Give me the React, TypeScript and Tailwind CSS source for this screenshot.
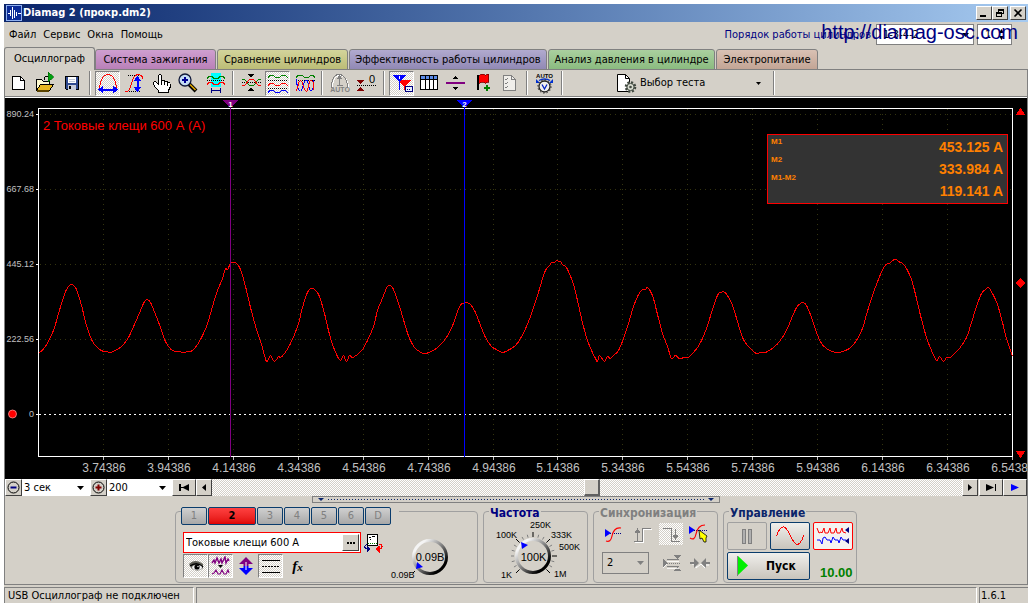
import React from "react";

const BEVEL =
  "border border-t-white border-l-white border-r-[#404040] border-b-[#404040] bg-[#d4d0c8]";
const DITHER =
  "bg-[repeating-conic-gradient(#ffffff_0_25%,#d4d0c8_0_50%)] bg-[length:2px_2px]";

/* ---------- toolbar icons, each on a 24 x 24 grid ---------- */

type Shape = { children: React.ReactNode; crisp?: boolean };

function Glyph({ children, crisp = true }: Shape) {
  return (
    <svg
      viewBox="0 0 24 24"
      className="block h-6 w-6 shrink-0"
      fill="none"
      shapeRendering={crisp ? "crispEdges" : "auto"}
      aria-hidden="true"
    >
      {children}
    </svg>
  );
}

const NewIcon = (
  <Glyph>
    <path d="M5.5 5.5h8l4 4v9h-12z" fill="#fff" stroke="#000" />
    <path d="M13.5 5.5v4h4" stroke="#000" />
  </Glyph>
);
const OpenIcon = (
  <Glyph>
    <path d="M2.5 19.5v-11h5l2 2h6v3" fill="#fffbd0" stroke="#000" />
    <path d="M2.5 19.500l4-6h13l-4 6z" fill="#e8b820" stroke="#000" />
    <path d="M3 20h12" stroke="#5a4300" strokeWidth="1.400" />
    <path d="M10.500 8.500c0-3 1-3 4-3" stroke="#000" />
    <path d="M14 1l6 5-6 5z" fill="#00a010" stroke="#006000" strokeWidth="0.600" />
  </Glyph>
);
const SaveIcon = (
  <Glyph>
    <path d="M4.500 5.500h13v13h-12l-1-1z" fill="#304a90" stroke="#000" />
    <rect x="7" y="6" width="8" height="6" fill="#fff" />
    <path d="M8 8.500h6M8 10.500h6" stroke="#c0c8d8" />
    <rect x="7" y="14" width="8" height="5" fill="#c8ccd8" />
    <rect x="8" y="15" width="2" height="3" fill="#000" />
  </Glyph>
);
const ArcWidthIcon = (
  <Glyph>
    <path d="M3.500 20C3.500 8 8 3.500 12 3.500S20.500 8 20.500 20" stroke="#f00" />
    <path d="M4 18.500h16" stroke="#00f" strokeWidth="2" />
    <path d="M2 18.500l5-4v8zM22 18.500l-5-4v8z" fill="#00f" />
  </Glyph>
);
const ArcHeightIcon = (
  <Glyph>
    <path d="M5 4.500h12M4 20.500h14" stroke="#000" strokeDasharray="1 1" />
    <path d="M1.500 20.500h2C10 20 7 4 15 3.500c3 0 4 1 5 4" stroke="#f00" />
    <path d="M14.500 7v12" stroke="#00f" strokeWidth="2" />
    <path d="M14.500 5l4 5h-8zM14.500 21l4-5h-8z" fill="#00f" />
  </Glyph>
);
const HandIcon = (
  <Glyph>
    <path
      d="M8.500 21.500v-2l-4-4-1-3c0-2 2-2 3-1l2 2v-8c0-2.500 3-2.500 3 0v5c0-1.500 3-1.500 3 0v1c0-1.500 3-1.500 3 0v1c0-1.300 2.500-1.300 2.500 0v4l-1.500 3v2z"
      fill="#fff"
      stroke="#000"
    />
    <path d="M11.500 10v4M14.500 11v3M17.500 12v3" stroke="#000" />
  </Glyph>
);
const ZoomIcon = (
  <Glyph crisp={false}>
    <path d="M12 13l7 7" stroke="#000" strokeWidth="4" />
    <path d="M13 13.500l5.500 5.500" stroke="#e0a800" strokeWidth="1.600" />
    <circle cx="8" cy="9" r="6" fill="#c4dcf4" stroke="#101838" strokeWidth="1.300" />
    <path d="M8 6v6M5 9h6" stroke="#000090" strokeWidth="2" />
  </Glyph>
);
const WaveSpanIcon = (
  <Glyph>
    <rect x="7" y="2" width="10" height="14" fill="#00ffff" />
    <path d="M3 7.500l2-2h3l2 2h4l2-2h3l2 2" stroke="#008000" />
    <path d="M3 9.500h18" stroke="#000" strokeDasharray="1 1" />
    <path d="M3 13.500l2-2h3l2 2h4l2-2h3l2 2" stroke="#f00" />
    <path d="M7.500 17v5M16.500 17v5M8 19.500h8" stroke="#000080" />
  </Glyph>
);
const CrossWavesIcon = (
  <Glyph>
    <path d="M2.500 11.500h19" stroke="#000" strokeDasharray="1 1" />
    <path d="M2.500 8.500h3l5 6h4l5-6h2" stroke="#008000" />
    <path d="M2.500 14.500h3l5-6h4l5 6h2" stroke="#f00" />
    <path d="M9 3h6l-3 4zM9 20h6l-3-4z" fill="#000" />
  </Glyph>
);
const WAVE = "l2-2h3l3 2h3l3-2h3l3 2";
const ThreeWavesIcon = (
  <Glyph>
    <path d={"M2 6.500" + WAVE} stroke="#008000" />
    <path d="M2 9.500h20M2 17.500h20" stroke="#000" strokeDasharray="1 1" />
    <path d={"M2 14.500" + WAVE} stroke="#f00" />
    <path d={"M2 21.500" + WAVE} stroke="#00f" />
  </Glyph>
);
const OverlaidWavesIcon = (
  <Glyph>
    <path d="M3 6.500l2-2h4l3 2h3l3-2h2l2 2" stroke="#008000" />
    <path d="M2.500 9.500h19" stroke="#000" strokeDasharray="1 1" />
    <path d="M3.500 8c0 7 2 12 4 12s3-11 6-11c2 0 2 11 4.500 11 1.500 0 3-5 3-11" stroke="#00f" />
    <path d="M3 19.500c2 0 2-10 4.500-10s3 10.500 6 10.500c2 0 2-10.500 4.500-10.500 2 0 3 4 3 9" stroke="#f00" />
  </Glyph>
);
const AutoArcIcon = (
  <Glyph>
    <path d="M4.500 18C4.500 8 8 4.500 12 4.500S20.500 8 20.500 18" stroke="#fff" />
    <path d="M3.500 17C3.500 7 7 3.500 11 3.500S19.500 7 19.500 17" stroke="#808080" />
    <path d="M11.500 6v9M9 14.500h6" stroke="#808080" />
    <path d="M11.500 4l3 4h-6z" fill="#808080" />
    <text x="12" y="21" textAnchor="middle" fontSize="7" fontWeight="bold" fill="#808080" fontFamily="Liberation Sans, sans-serif">
      AUTO
    </text>
  </Glyph>
);
const ZeroLevelIcon = (
  <Glyph>
    <path d="M2 14.500h20" stroke="#000" strokeDasharray="1 1" />
    <path d="M2 9h7l-3.500 4zM2 20h7l-3.500-4z" fill="#800000" />
    <text x="17" y="12" textAnchor="middle" fontSize="11" fill="#000" fontFamily="Liberation Sans, sans-serif">
      0
    </text>
  </Glyph>
);
const MarkersIcon = (
  <Glyph>
    <path d="M8 9h13l-6.500 7z" fill="#f00" />
    <path d="M14.500 14v5" stroke="#f00" />
    <path d="M3 4h13l-6.500 7z" fill="#00f" />
    <path d="M9.500 10v9" stroke="#00f" />
    <path d="M9.500 5v3" stroke="#fff" />
    <rect x="15.500" y="15.500" width="7" height="5" fill="#e8f0ff" stroke="#000080" />
    <path d="M17 18.500h4" stroke="#000080" strokeDasharray="1 1" />
  </Glyph>
);
const TableIcon = (
  <Glyph>
    <rect x="3.500" y="4.500" width="17" height="14" fill="#fff" stroke="#000" />
    <rect x="4" y="5" width="16" height="3" fill="#5c8ce8" />
    <path d="M4 8.500h16M8.500 5v14M12.500 5v14M16.500 5v14" stroke="#000" />
  </Glyph>
);
const SplitIcon = (
  <Glyph>
    <path d="M2 11.500h19" stroke="#800080" strokeWidth="2" />
    <path d="M8 8h6l-3-3zM8 16h6l-3 3z" fill="#000" />
  </Glyph>
);
const FlagIcon = (
  <Glyph>
    <path d="M7.500 4l4-1 2 1 4-1v8l-4 1-2-1-4 1z" fill="#f00" stroke="#700" strokeWidth="0.800" />
    <path d="M6.500 4v15" stroke="#000" strokeWidth="2" />
    <path d="M15.500 14v6M12.500 17h6" stroke="#008000" strokeWidth="2" />
  </Glyph>
);
const ChecklistIcon = (
  <Glyph>
    <path d="M5.500 4.500h8l4 4v11h-12z" fill="#f0eeea" stroke="#808080" />
    <path d="M13.500 4.500v4h4" stroke="#808080" />
    <path d="M7 8l1 1 2-2M7 12l1 1 2-2M7 16l1 1 2-2" stroke="#808080" />
  </Glyph>
);
const AutoVoltIcon = (
  <Glyph crisp={false}>
    <text x="11.500" y="7" textAnchor="middle" fontSize="6" fontWeight="bold" fill="#000" fontFamily="Liberation Sans, sans-serif">
      AUTO
    </text>
    <path d="M6 9.500c3-2 8-2 11 0" stroke="#0030d0" strokeWidth="1.300" />
    <path d="M3 8v4h4zM20 8v4h-4z" fill="#0030d0" />
    <circle cx="11.500" cy="15.500" r="5.500" fill="#f0f0f0" stroke="#202020" strokeWidth="1.300" />
    <circle cx="11.500" cy="15.500" r="6.600" stroke="#202020" strokeDasharray="1.400 2.050" />
    <path d="M9 13.500l2.500 4.500 2.500-4.500" stroke="#0020c0" strokeWidth="1.300" />
  </Glyph>
);
const TestDocIcon = (
  <Glyph crisp={false}>
    <path d="M2.500 3.500h8l4 4v13h-12z" fill="#fff" stroke="#000" />
    <path d="M10.500 3.500v4h4" stroke="#000" />
    <circle cx="15.500" cy="16" r="4.500" fill="#d8dcd0" stroke="#404840" strokeWidth="2.600" strokeDasharray="2 1.530" />
    <circle cx="15.500" cy="16" r="3.600" fill="#d8dcd0" stroke="#404840" />
    <circle cx="15.500" cy="16" r="1.300" fill="#404840" />
  </Glyph>
);

type Tool = { name: string; icon: React.ReactNode; on?: boolean };

const TOOL_GROUPS: Tool[][] = [
  [
    { name: "Новый", icon: NewIcon },
    { name: "Открыть", icon: OpenIcon },
    { name: "Сохранить", icon: SaveIcon },
  ],
  [
    { name: "Масштаб по ширине", icon: ArcWidthIcon, on: true },
    { name: "Масштаб по высоте", icon: ArcHeightIcon },
    { name: "Сдвиг", icon: HandIcon },
    { name: "Лупа", icon: ZoomIcon },
    { name: "Выделение", icon: WaveSpanIcon },
  ],
  [
    { name: "Совместить", icon: CrossWavesIcon },
    { name: "Раздельно", icon: ThreeWavesIcon, on: true },
    { name: "Наложить", icon: OverlaidWavesIcon },
  ],
  [
    { name: "Автомасштаб", icon: AutoArcIcon },
    { name: "Нулевой уровень", icon: ZeroLevelIcon },
  ],
  [
    { name: "Маркеры", icon: MarkersIcon, on: true },
    { name: "Таблица", icon: TableIcon },
    { name: "Линия", icon: SplitIcon },
    { name: "Добавить метку", icon: FlagIcon },
    { name: "Список", icon: ChecklistIcon },
  ],
  [{ name: "Автоизмерение", icon: AutoVoltIcon }],
];

function ToolButton({ name, icon, on }: Tool) {
  return (
    <button
      aria-label={name}
      aria-pressed={on ? true : undefined}
      className={
        "mx-px flex h-[25px] w-[25px] items-center justify-center overflow-hidden border " +
        (on
          ? "border-t-[#808080] border-l-[#808080] border-r-white border-b-white " + DITHER
          : "border-transparent")
      }
    >
      {icon}
    </button>
  );
}

function Separator() {
  return (
    <div className="flex h-full w-2 justify-center py-px">
      <div className="w-[2px] border-l border-[#808080] bg-white" />
    </div>
  );
}

/* ---------- title, menu, tabs ---------- */

function TitleBar() {
  return (
    <header className="flex h-[18px] items-center bg-linear-to-r from-[#0a246a] to-[#a6caf0] pr-[2px] pl-[2px]">
      <svg viewBox="0 0 16 16" className="mr-px h-4 w-4" fill="none" aria-hidden="true">
        <rect width="16" height="16" rx="1" fill="#0c2c98" />
        <rect x="0.500" y="0.500" width="15" height="15" stroke="#8fb0f0" />
        <path d="M2 8.500h2M4.500 5v6M6.500 2v12M8.500 5v8M10.500 7v4M12 8.500h3" stroke="#fff" strokeWidth="1" />
      </svg>
      <h1 className="text-[11px] font-bold text-white">Diamag 2 (прокр.dm2)</h1>
      <div className="ml-auto flex">
        <button aria-label="Свернуть" className={"flex h-[14px] w-4 items-center justify-center " + BEVEL}>
          <svg viewBox="0 0 10 10" className="h-[10px] w-[10px]" shapeRendering="crispEdges">
            <rect x="1" y="7" width="6" height="2" />
          </svg>
        </button>
        <button aria-label="Восстановить" className={"flex h-[14px] w-4 items-center justify-center " + BEVEL}>
          <svg viewBox="0 0 10 10" className="h-[10px] w-[10px]" shapeRendering="crispEdges" fill="none" stroke="#000">
            <path d="M3.500 4V1.500h5v4H6M3 2h6M1.500 4.500h5v4h-5zM1 5h6" />
          </svg>
        </button>
        <button aria-label="Закрыть" className={"ml-[2px] flex h-[14px] w-4 items-center justify-center " + BEVEL}>
          <svg viewBox="0 0 10 10" className="h-[10px] w-[10px]" fill="none" stroke="#000">
            <path d="M1.500 1.500l7 7M8.500 1.500l-7 7" strokeWidth="1.600" />
          </svg>
        </button>
      </div>
    </header>
  );
}

function MenuBar() {
  return (
    <div className="relative flex h-[25px] items-center pr-4 pl-[5px]">
      <nav className="flex gap-[7px]">
        <button>Файл</button>
        <button>Сервис</button>
        <button>Окна</button>
        <button>Помощь</button>
      </nav>
      <div className="ml-auto flex items-center">
        <label htmlFor="order" className="mr-[5px] text-[#000080]">
          Порядок работы цилиндров
        </label>
        <div className="relative mr-[3px]">
          <select
            id="order"
            className="block h-[21px] w-[98px] appearance-none border border-[#808080] bg-white pl-[6px]"
            defaultValue="1-3-4-2"
          >
            <option>1-3-4-2</option>
          </select>
          <svg viewBox="0 0 7 4" className="pointer-events-none absolute top-[9px] right-[5px] h-1 w-[7px]">
            <path d="M0 0h7L3.500 4z" />
          </svg>
        </div>
        <div className="relative">
          <input
            aria-label="Номер цилиндра"
            defaultValue="1"
            className="block h-[21px] w-[35px] border border-[#808080] bg-white pl-[7px]"
          />
          <svg viewBox="0 0 5 11" className="pointer-events-none absolute top-[5px] right-[8px] h-[11px] w-[5px]">
            <path d="M0 4h5L2.500 0zM0 7h5L2.500 11z" />
          </svg>
        </div>
      </div>
      <a
        href="http://diamag-osc.com"
        className="absolute top-0 right-[10px] z-10 font-['Liberation_Sans',sans-serif] text-[20px] leading-[20px] text-[#000080]"
      >
        http://diamag-osc.com
      </a>
    </div>
  );
}

const TABS = [
  { name: "Система зажигания", tint: "w-[121px] from-[#cf9fd0] to-[#b980b8]" },
  { name: "Сравнение цилиндров", tint: "w-[131px] from-[#d3d49b] to-[#bcbd76]" },
  { name: "Эффективность работы цилиндров", tint: "w-[198px] from-[#b1aacf] to-[#9189b5]" },
  { name: "Анализ давления в цилиндре", tint: "w-[167px] from-[#aad09f] to-[#8bbb80]" },
  { name: "Электропитание", tint: "w-[102px] from-[#d9c1b4] to-[#c3a595]" },
];

function TabBar() {
  return (
    <div role="tablist" className="relative z-10 -mb-px flex h-[23px] items-end">
      <button
        role="tab"
        aria-selected="true"
        className="h-[23px] w-[91px] rounded-t-[3px] border border-b-0 border-[#808080] bg-[#d4d0c8]"
      >
        Осциллограф
      </button>
      {TABS.map((t) => (
        <button
          key={t.name}
          role="tab"
          aria-selected="false"
          className={
            "mr-px flex h-[21px] items-center justify-center rounded-t-[3px] border border-[#808080] bg-linear-to-b whitespace-nowrap " +
            t.tint
          }
        >
          {t.name}
        </button>
      ))}
    </div>
  );
}

function Toolbar() {
  return (
    <div className="flex h-[28px] items-center border-b border-white">
      <div className="flex h-[27px] w-full items-center border-b border-[#808080]">
        {TOOL_GROUPS.map((g, i) => (
          <React.Fragment key={i}>
            {g.map((t) => (
              <ToolButton key={t.name} {...t} />
            ))}
            <Separator />
          </React.Fragment>
        ))}
        <button className="ml-[49px] flex h-6 w-[155px] items-center pr-[9px]">
          {TestDocIcon}
          <span className="ml-px">Выбор теста</span>
          <svg viewBox="0 0 5 3" className="ml-auto h-[3px] w-[5px]">
            <path d="M0 0h5L2.500 3z" />
          </svg>
        </button>
        <Separator />
      </div>
    </div>
  );
}

/* ---------- oscilloscope plot ---------- */

const TRACE: number[] = [
  38, 353, 45, 346, 53, 330, 58, 313, 63, 297, 66, 289, 69, 285, 71, 284, 73, 285, 76, 289, 81, 305, 86, 325, 92, 341,
  98, 348, 103, 351, 106, 351, 109, 352, 115, 350, 122, 345, 128, 337, 134, 324, 140, 310, 144, 301, 147, 299, 150, 302,
  155, 314, 160, 327, 164, 339, 168, 346, 172, 350, 178, 351, 183, 352, 188, 351, 192, 350, 197, 344, 201, 337, 206,
  326, 210, 313, 214, 299, 217, 290, 222, 278, 225, 268, 227, 269, 230, 263, 233, 262, 236, 263, 240, 269, 245, 286,
  250, 307, 256, 329, 261, 344, 264, 355, 266, 361, 268, 359, 270, 355, 274, 361, 278, 356, 280, 357, 284, 353, 289,
  345, 294, 334, 298, 323, 302, 307, 306, 294, 309, 289, 312, 288, 315, 290, 319, 296, 324, 313, 328, 330, 331, 341,
  336, 354, 340, 360, 343, 355, 346, 361, 349, 355, 352, 357, 357, 354, 362, 349, 367, 340, 373, 326, 377, 310, 381,
  300, 385, 290, 388, 285, 392, 287, 396, 297, 400, 309, 405, 326, 409, 338, 414, 347, 419, 351, 424, 353, 431, 351,
  437, 347, 443, 341, 450, 330, 454, 320, 459, 306, 462, 303, 466, 302, 470, 304, 475, 312, 480, 325, 485, 337, 491,
  346, 496, 349, 502, 352, 509, 349, 515, 345, 520, 338, 526, 326, 531, 313, 537, 295, 543, 275, 546, 268, 549, 265,
  551, 262, 554, 262, 556, 260, 558, 261, 560, 261, 562, 264, 565, 266, 568, 271, 573, 284, 577, 300, 581, 318, 586,
  337, 591, 350, 595, 358, 597, 361, 599, 355, 604, 361, 607, 356, 610, 358, 613, 355, 618, 350, 623, 338, 628, 323,
  633, 306, 638, 294, 642, 289, 645, 289, 647, 287, 652, 295, 657, 314, 662, 333, 667, 346, 671, 358, 675, 355, 679,
  358, 684, 357, 688, 357, 692, 353, 697, 347, 702, 338, 707, 325, 712, 309, 716, 297, 719, 292, 721, 292, 723, 291,
  727, 295, 732, 305, 737, 321, 742, 337, 747, 345, 752, 350, 756, 353, 760, 352, 765, 352, 773, 347, 779, 341, 786,
  330, 791, 318, 796, 307, 800, 303, 803, 302, 806, 305, 811, 317, 816, 332, 821, 343, 826, 348, 832, 351, 838, 352,
  845, 350, 850, 347, 856, 340, 862, 328, 866, 314, 870, 301, 873, 292, 876, 284, 880, 274, 884, 266, 887, 263, 889,
  263, 892, 260, 896, 259, 898, 261, 902, 263, 906, 268, 911, 279, 916, 298, 920, 315, 926, 337, 931, 350, 936, 360,
  939, 356, 943, 361, 946, 357, 950, 357, 953, 354, 959, 348, 966, 337, 971, 322, 976, 306, 981, 293, 985, 289, 988,
  287, 992, 293, 997, 304, 1002, 322, 1006, 338, 1012, 356,
];

function tracePath(p: number[]): string {
  const n = p.length / 2;
  const at = (i: number) => {
    const k = Math.max(0, Math.min(n - 1, i));
    return [p[2 * k], p[2 * k + 1]];
  };
  let d = `M${p[0]} ${p[1]}`;
  for (let i = 0; i < n - 1; i++) {
    const [a, b, c, e] = [at(i - 1), at(i), at(i + 1), at(i + 2)];
    d += `C${b[0] + (c[0] - a[0]) / 6} ${b[1] + (c[1] - a[1]) / 6} ${c[0] - (e[0] - b[0]) / 6} ${
      c[1] - (e[1] - b[1]) / 6
    } ${c[0]} ${c[1]}`;
  }
  return d;
}

const X_TICKS = [103, 168, 233, 298, 363, 428, 493, 557, 622, 687, 752, 817, 882, 947, 1012];
const Y_TICKS = [
  { y: 114, label: "890.24" },
  { y: 189, label: "667.68" },
  { y: 264, label: "445.12" },
  { y: 339, label: "222.56" },
  { y: 414, label: "0" },
];

function Plot() {
  return (
    <div className="relative bg-black">
      <svg
        viewBox="5 98 1022 381"
        className="block h-auto w-full font-['Liberation_Sans',sans-serif]"
        role="img"
        aria-label="Осциллограмма"
      >
        <g shapeRendering="crispEdges" fill="none">
          {X_TICKS.slice(0, -1).map((x) => (
            <path key={x} d={`M${x + 0.5} 109V456`} stroke="#34340f" strokeDasharray="1 4" />
          ))}
          {Y_TICKS.slice(0, 4).map((t) => (
            <path key={t.y} d={`M40 ${t.y + 0.5}H1012`} stroke="#34340f" strokeDasharray="1 4" />
          ))}
          <path d="M39 414.500H1012" stroke="#fff" strokeDasharray="2 3" />
          <rect x="38.500" y="108.500" width="974" height="348" stroke="#fff" />
          {Y_TICKS.map((t) => (
            <path key={t.y} d={`M36 ${t.y + 0.5}H39`} stroke="#fff" />
          ))}
          {X_TICKS.map((x) => (
            <path key={x} d={`M${x + 0.5} 457V460`} stroke="#c0c0c0" />
          ))}
          <path d={tracePath(TRACE)} stroke="#f00" transform="translate(0.5 0.5)" />
          <path d="M230.500 101V457" stroke="#800080" />
          <path d="M464.500 101V457" stroke="#00f" />
          <path d="M223 100h15l-7.500 8z" fill="#800080" />
          <path d="M457 100h15l-7.500 8z" fill="#00f" />
          <path d="M1020.500 108l5 7h-10zM1020.500 458l5-7h-10zM1020.500 278l5 5-5 5-5-5z" fill="#f00" />
        </g>
        <circle cx="12.500" cy="414" r="4" fill="#f00" stroke="#ff9090" strokeWidth="0.800" />
        <g fill="#fff" fontSize="8" fontWeight="bold" textAnchor="middle">
          <text x="230.500" y="107">1</text>
          <text x="464.500" y="107">2</text>
        </g>
        <g fill="#c0c0c0" fontSize="9" textAnchor="end">
          {Y_TICKS.map((t) => (
            <text key={t.y} x="34" y={t.y + 3}>
              {t.label}
            </text>
          ))}
        </g>
        <g fill="#c0c0c0" fontSize="12" textAnchor="middle">
          {X_TICKS.map((x, i) => (
            <text key={x} x={x + 1} y="472">
              {(3.74386 + i * 0.2).toFixed(5)}
            </text>
          ))}
        </g>
        <text x="43" y="130" fontSize="13" fill="#f00">
          2 Токовые клещи 600 А (А)
        </text>
      </svg>
      <div className="absolute top-[36px] right-[19px] flex h-[70px] w-[241px] justify-between border border-[#f00] bg-[#333333] pr-1 pl-[3px] font-['Liberation_Sans',sans-serif] font-bold text-[#ff8000]">
        <div className="-mt-[2px] text-[8px] leading-[18px]">
          <div>М1</div>
          <div>М2</div>
          <div>М1-М2</div>
        </div>
        <div className="pt-px text-right text-sm leading-[22px]">
          <div>453.125 A</div>
          <div>333.984 A</div>
          <div>119.141 A</div>
        </div>
      </div>
    </div>
  );
}

/* ---------- time scale and scrolling ---------- */

function Drop({ label, value, width }: { label: string; value: string; width: string }) {
  return (
    <div className="relative">
      <select
        aria-label={label}
        defaultValue={value}
        className={"block h-[17px] appearance-none bg-white pl-[2px] leading-[17px] " + width}
      >
        <option>{value}</option>
      </select>
      <svg viewBox="0 0 7 4" className="pointer-events-none absolute top-[7px] right-[6px] h-1 w-[7px]">
        <path d="M0 0h7L3.500 4z" />
      </svg>
    </div>
  );
}

function ScrollRow() {
  return (
    <div className="flex h-[17px] items-stretch">
      <button aria-label="Уменьшить время" className={"flex w-[17px] items-center justify-center " + BEVEL}>
        <svg viewBox="0 0 13 13" className="h-[13px] w-[13px]" fill="none">
          <circle cx="6.500" cy="6.500" r="5.500" stroke="#000" />
          <path d="M3.500 6.500h6" stroke="#000080" strokeWidth="2" />
        </svg>
      </button>
      <Drop label="Развёртка" value="3 сек" width="w-[68px]" />
      <button aria-label="Увеличить время" className={"flex w-[17px] items-center justify-center " + BEVEL}>
        <svg viewBox="0 0 13 13" className="h-[13px] w-[13px]" fill="none">
          <circle cx="6.500" cy="6.500" r="5.500" stroke="#000" />
          <path d="M3.500 6.500h6M6.500 3.500v6" stroke="#800000" strokeWidth="2" />
        </svg>
      </button>
      <Drop label="Масштаб" value="200" width="w-[65px]" />
      <button aria-label="В начало" className={"flex w-[24px] items-center justify-center " + BEVEL}>
        <svg viewBox="0 0 11 7" className="h-[7px] w-[11px]">
          <path d="M0 0h2v7H0zM10 0v7L3 3.500zM2 3h8v1H2z" />
        </svg>
      </button>
      <button aria-label="Назад" className={"flex w-[16px] items-center justify-center " + BEVEL}>
        <svg viewBox="0 0 4 7" className="h-[7px] w-1">
          <path d="M4 0v7L0 3.500z" />
        </svg>
      </button>
      <input
        type="range"
        aria-label="Позиция"
        min={0}
        max={734}
        defaultValue={372}
        className={
          "m-0 h-[17px] min-w-0 flex-1 appearance-none [&::-webkit-slider-thumb]:h-[17px] [&::-webkit-slider-thumb]:w-4 [&::-webkit-slider-thumb]:appearance-none [&::-webkit-slider-thumb]:border-r-2 [&::-webkit-slider-thumb]:border-b-2 [&::-webkit-slider-thumb]:border-t [&::-webkit-slider-thumb]:border-l [&::-webkit-slider-thumb]:border-t-white [&::-webkit-slider-thumb]:border-l-white [&::-webkit-slider-thumb]:border-r-[#606060] [&::-webkit-slider-thumb]:border-b-[#606060] [&::-webkit-slider-thumb]:bg-[#d4d0c8] " +
          DITHER
        }
      />
      <button aria-label="Вперёд" className={"flex w-[16px] items-center justify-center " + BEVEL}>
        <svg viewBox="0 0 4 7" className="h-[7px] w-1">
          <path d="M0 0v7l4-3.500z" />
        </svg>
      </button>
      <button aria-label="В конец" className={"ml-px flex w-[24px] items-center justify-center " + BEVEL}>
        <svg viewBox="0 0 11 7" className="h-[7px] w-[11px]">
          <path d="M9 0h1v7H9zM0 0v7l8-3.500z" />
        </svg>
      </button>
      <button aria-label="Воспроизвести" className={"flex w-[24px] items-center justify-center " + BEVEL}>
        <svg viewBox="0 0 8 7" className="h-[7px] w-2" fill="#00f">
          <path d="M0 0v7l8-3.500z" />
        </svg>
      </button>
    </div>
  );
}

function Splitter() {
  return (
    <div className="mx-auto flex h-[7px] w-[408px] items-center border border-[#808080] px-[5px]">
      <svg viewBox="0 0 6 3" className="h-[3px] w-[6px]" fill="#0a246a">
        <path d="M0 0h6L3 3z" />
      </svg>
      <svg viewBox="0 0 376 1" className="mx-[4px] h-px min-w-0 flex-1" preserveAspectRatio="none" shapeRendering="crispEdges">
        <path d="M0 .5h376" stroke="#0a246a" strokeDasharray="1 2" />
      </svg>
      <svg viewBox="0 0 6 3" className="h-[3px] w-[6px]" fill="#0a246a">
        <path d="M0 0h6L3 3z" />
      </svg>
    </div>
  );
}

/* ---------- bottom control groups ---------- */

const GROUP = "h-[72px] rounded-[4px] border border-[#a0a0a0]";
const LEGEND = "-mt-[6px] ml-[5px] w-fit bg-[#d4d0c8] px-px text-[12px] leading-[14px] font-bold";

function MiniTool({ name, on, children }: { name: string; on?: boolean; children: React.ReactNode }) {
  return (
    <button
      aria-label={name}
      aria-pressed={on ? true : undefined}
      className={
        "flex h-6 w-[25px] items-center justify-center border " +
        (on
          ? "border-t-[#808080] border-l-[#808080] border-r-white border-b-white " + DITHER
          : "border-transparent")
      }
    >
      {children}
    </button>
  );
}

function KnobFace({ cx, cy, id }: { cx: number; cy: number; id: string }) {
  return (
    <>
      <defs>
        <linearGradient id={id} x1="0.1" y1="0.1" x2="0.9" y2="0.9">
          <stop offset="0.1" stopColor="#f4f4f4" />
          <stop offset="0.5" stopColor="#808080" />
          <stop offset="0.9" stopColor="#000" />
        </linearGradient>
      </defs>
      <circle cx={cx} cy={cy} r="16.500" fill="#d4d0c8" stroke={`url(#${id})`} strokeWidth="3" />
    </>
  );
}

function ChannelGroup() {
  return (
    <section aria-label="Канал" className={"w-[303px] pl-[5px] " + GROUP}>
      <div className="-mt-[5px] flex w-[218px] bg-[#d4d0c8]">
        {["1", "2", "3", "4", "5", "6", "D"].map((c) => (
          <button
            key={c}
            className={
              "mr-px h-[18px] rounded-[2px] border border-[#0a3c6c] bg-linear-to-b leading-4 " +
              (c === "2"
                ? "w-[48px] from-[#ff4040] to-[#e00000] font-bold text-black"
                : "w-[26px] from-[#d0d0d0] to-[#a8a8a8] text-[#808080]")
            }
          >
            {c}
          </button>
        ))}
      </div>
      <div className="flex pt-[7px] pl-[2px]">
        <div>
          <div className="flex items-center">
            <div className="flex h-[21px] w-[178px] items-center border border-[#f00] bg-white">
              <input
                aria-label="Датчик"
                defaultValue="Токовые клещи 600 А"
                className="h-[19px] min-w-0 flex-1 bg-transparent pl-[2px]"
              />
              <button aria-label="Выбрать датчик" className={"mr-px flex h-[17px] w-[17px] items-center justify-center " + BEVEL}>
                <svg viewBox="0 0 8 2" className="h-[2px] w-2" shapeRendering="crispEdges">
                  <path d="M0 0h2v2H0zM3 0h2v2H3zM6 0h2v2H6z" />
                </svg>
              </button>
            </div>
            <button aria-label="Подключение" className="ml-[3px]">
              <svg viewBox="0 0 19 20" className="block h-5 w-[19px]" fill="none" shapeRendering="crispEdges">
                <rect x="3.500" y="1.500" width="10" height="11" fill="#fff" stroke="#000" />
                <path d="M5 4.500h2M8 3.500h3M6 6.500h1" stroke="#000" />
                <path d="M4 10.500h9" stroke="#008000" strokeDasharray="1 1" />
                <path d="M2.500 11.500l-2 2 1 2h2" stroke="#000080" />
                <path d="M3 12.500l4 3.500-4 3.500z" fill="#000080" />
                <path d="M15 11.500h2l1 2-1 2h-2" stroke="#f00" />
                <path d="M15.500 12.500l-4 3.500 4 3.500z" fill="#f00" />
              </svg>
            </button>
          </div>
          <div className="mt-px flex">
            <MiniTool name="Показать канал" on>
              <svg viewBox="0 0 16 12" className="h-3 w-4" fill="none">
                <path d="M1 4c4-4 9-4 14 0v4c-2 3-8 3-11 1z" fill="#606058" />
                <path d="M2 6c4-3 9-3 13 1" stroke="#000" strokeWidth="1.500" />
                <ellipse cx="9" cy="7.500" rx="5" ry="2.500" fill="#f0f0f0" />
                <circle cx="9" cy="7" r="2.600" fill="#000" />
                <circle cx="10" cy="6.500" r="0.700" fill="#fff" />
              </svg>
            </MiniTool>
            <MiniTool name="Фильтр" on>
              <svg viewBox="0 0 19 20" className="h-5 w-[19px]" fill="none">
                <path d="M1 7l2-3 1 3 2-5 2 5 2-4 1 4 3-6 1 6 2-4 1 2" stroke="#800080" strokeWidth="1.400" />
                <path d="M7 9h5l-2.500 3z" fill="#000" />
                <path d="M1 18l2-1 2-3 2 4 2 0 2-4 2 4 2 0 2-4 1 3" stroke="#800080" strokeWidth="1.100" />
              </svg>
            </MiniTool>
            <MiniTool name="Сдвиг по вертикали">
              <svg viewBox="0 0 16 18" className="h-[18px] w-4">
                <path d="M8 0l7 7h-4.500v2h-5V7H1z" fill="#800080" />
                <path d="M8 18l7-7h-4.500V9h-5v2H1z" fill="#00f" />
                <path d="M7.500 5h1v8h-1z" fill="#fff" />
              </svg>
            </MiniTool>
            <MiniTool name="Линии" on>
              <svg viewBox="0 0 18 14" className="h-[14px] w-[18px]" stroke="#000" shapeRendering="crispEdges">
                <path d="M0 1.500h18M0 13.500h18" />
                <path d="M0 7.500h18" strokeDasharray="2 1" />
              </svg>
            </MiniTool>
            <button className="ml-[2px] w-[25px] font-['Liberation_Serif',serif] text-[15px] leading-5 font-bold italic">
              f<span className="text-[11px]">x</span>
            </button>
          </div>
        </div>
        <svg viewBox="0 0 68 50" className="ml-[2px] block h-[50px] w-[68px] font-['Liberation_Sans',sans-serif]" fill="#000">
          <KnobFace cx={45} cy={25} id="gain" />
          <path d="M32 30l6 5-7 2z" fill="#00f" />
          <text x="45" y="29" textAnchor="middle" fontSize="11">0.09В</text>
          <text x="6" y="46" fontSize="9">0.09В</text>
          <path d="M28 41l2-2" stroke="#000" />
        </svg>
      </div>
    </section>
  );
}

const RATE_TICKS = Array.from({ length: 19 }, (_, i) => 135 + i * 15);

function RateGroup() {
  return (
    <section aria-label="Частота" className={"w-[105px] " + GROUP}>
      <div className={"text-[#000080] " + LEGEND}>Частота</div>
      <svg viewBox="484 520 103 61" className="block h-[61px] w-full font-['Liberation_Sans',sans-serif]">
        {RATE_TICKS.map((a, i) => {
          const r = (a * Math.PI) / 180;
          const major = i === 0 || i === 6 || i === 9 || i === 12 || i === 15 || i === 18;
          const r1 = 19;
          const r2 = major ? 24 : 22;
          return (
            <path
              key={a}
              d={`M${533 + r1 * Math.cos(r)} ${556 + r1 * Math.sin(r)}L${533 + r2 * Math.cos(r)} ${556 + r2 * Math.sin(r)}`}
              stroke={major ? "#000" : "#808080"}
            />
          );
        })}
        <KnobFace cx={533} cy={556} id="rate" />
        <path d="M521 542l7 3-6 4z" fill="#00f" />
        <text x="533.500" y="561" textAnchor="middle" fontSize="11">100K</text>
        <g fontSize="9">
          <text x="530" y="528">250K</text>
          <text x="496" y="538">100K</text>
          <text x="551" y="538">333K</text>
          <text x="559" y="550">500K</text>
          <text x="501" y="578">1K</text>
          <text x="554" y="577">1M</text>
        </g>
      </svg>
    </section>
  );
}

function SyncGroup() {
  return (
    <section aria-label="Синхронизация" className={"w-[125px] " + GROUP}>
      <div className={"text-[#808080] " + LEGEND}>Синхронизация</div>
      <div className="mt-[3px] flex items-center justify-between pr-[6px] pl-2">
        <button aria-label="Уровень">
          <svg viewBox="0 0 24 22" className="block h-[22px] w-6" fill="none">
            <path d="M3 6v8l6-4z" fill="#00f" />
            <path d="M8 10.500h12" stroke="#000080" strokeDasharray="1 1" />
            <path d="M4 18c3 1 5 0 6-5S13 4 19 5" stroke="#f00" strokeWidth="1.200" />
          </svg>
        </button>
        <button aria-label="По фронту">
          <svg viewBox="0 0 24 22" className="block h-[22px] w-6" fill="none" shapeRendering="crispEdges">
            <path d="M5 19.500h8.500v-13h8" stroke="#fff" />
            <path d="M4 18.500h8.500v-13h8" stroke="#808080" />
            <path d="M7.500 8v10" stroke="#808080" />
            <path d="M7.500 5l3 5h-6z" fill="#808080" />
          </svg>
        </button>
        <button aria-label="По спаду" className={DITHER}>
          <svg viewBox="0 0 24 22" className="block h-[22px] w-6" fill="none" shapeRendering="crispEdges">
            <path d="M4 5.500h8.500v13h8" stroke="#808080" />
            <path d="M16.500 6v10" stroke="#808080" />
            <path d="M16.500 17l3-5h-6z" fill="#808080" />
          </svg>
        </button>
        <button aria-label="Выбрать уровень">
          <svg viewBox="0 0 24 22" className="block h-[22px] w-6" fill="none">
            <path d="M2 3v8l6-4z" fill="#00f" />
            <path d="M7 7.500h14" stroke="#000080" strokeDasharray="1 1" />
            <path d="M3 15c3 2 5 1 6-4S13 2 18 2" stroke="#f00" strokeWidth="1.200" />
            <path d="M12 7l1 9 2-1 2 4h2l0-4 1-2-4-3z" fill="#ff0" stroke="#000" strokeWidth="0.800" />
          </svg>
        </button>
      </div>
      <div className="mt-[7px] flex items-center pl-2">
        <div className="relative">
          <select
            aria-label="Канал синхронизации"
            defaultValue="2"
            className="block h-[22px] w-[47px] appearance-none border border-[#808080] bg-[#d4d0c8] pl-1"
          >
            <option>2</option>
          </select>
          <svg viewBox="0 0 7 4" className="pointer-events-none absolute top-[9px] right-[5px] h-1 w-[7px]" fill="#808080">
            <path d="M0 0h7L3.500 4z" />
          </svg>
        </div>
        <button aria-label="Гистерезис" className="ml-[13px]">
          <svg viewBox="0 0 20 18" className="block h-[18px] w-5" fill="#808080" shapeRendering="crispEdges">
            <path d="M1 5v8l4-4zM12 1h7l-3.500 4zM12 17h7l-3.500-4zM5 5h12v1H5zM5 12h12v1H5z" />
            <path d="M5 9.500h13" stroke="#808080" strokeDasharray="1 1" />
            <path d="M1 14l4-4M5 7h12M5 14h12" stroke="#fff" strokeWidth="0.800" />
          </svg>
        </button>
        <button aria-label="Центрировать" className="ml-2">
          <svg viewBox="0 0 20 12" className="block h-3 w-5">
            <path d="M2 7h4v4l5-4 4 4V8h4" stroke="#fff" fill="none" />
            <path d="M0 5h4V1l5 5-5 5V7H0zM20 5h-4V1l-5 5 5 5V7h4z" fill="#808080" />
          </svg>
        </button>
      </div>
    </section>
  );
}

function ControlGroup() {
  const face = "flex h-[28px] w-10 items-center justify-center rounded-[2px] border ";
  return (
    <section aria-label="Управление" className={"w-[134px] " + GROUP}>
      <div className={"text-[#0a246a] " + LEGEND}>Управление</div>
      <div className="flex gap-[3px] pt-[2px] pl-[3px]">
        <button aria-label="Пауза" className={face + "border-[#a0a0a0]"}>
          <svg viewBox="0 0 12 15" className="h-[15px] w-3" fill="#b0b0b0" stroke="#808080" shapeRendering="crispEdges">
            <path d="M1.500.5h3v14h-3zM7.500.5h3v14h-3z" />
          </svg>
        </button>
        <button aria-label="Осциллограмма" className={face + "border-[#0a3c6c] bg-linear-to-b from-[#f0efec] to-[#c8c4bc]"}>
          <svg viewBox="0 0 29 20" className="h-5 w-[29px]" fill="none" shapeRendering="crispEdges">
            <path d="M.5 10C5-2 9-2 14 9s9 14 14 0" stroke="#f00" />
          </svg>
        </button>
        <button aria-label="Непрерывная запись" className={face + "border-[#f00] bg-[#f4f2f0]"}>
          <svg viewBox="0 0 34 20" className="h-5 w-[34px]" fill="none">
            <path d="M1 2l2 5 2-1 1 1 2-5 1 5 3 0 2-5 1 5 3 0 2-5 1 5 3 0 2-5 1 4 3 1" stroke="#f00" />
            <path d="M1 14h3l2 4 1-6 2-1 2 3h3l1 3 2-6 2 3h3l1 3 2-6 2 3h3l1 2" stroke="#00f" />
            <path d="M33 1v6l-4-3zM33 12v6l-4-3z" fill="#000080" />
          </svg>
        </button>
      </div>
      <div className="flex items-end pt-[2px] pl-[3px]">
        <button className="flex h-[28px] w-[83px] items-center rounded-[2px] border border-[#0a3c6c] bg-linear-to-b from-[#f0efec] to-[#c8c4bc] pl-[9px] text-[12px] font-bold">
          <svg viewBox="0 0 11 20" className="mr-[18px] h-5 w-[11px]">
            <path d="M1 0l10 9.500L1 19z" fill="#00f000" />
            <path d="M0 0h1v20H0z" fill="#808080" />
          </svg>
          Пуск
        </button>
        <output className="ml-[10px] font-['Liberation_Sans',sans-serif] text-[13px] leading-[14px] font-bold text-[#008000]">
          10.00
        </output>
      </div>
    </section>
  );
}

function StatusBar() {
  return (
    <footer className="mt-[2px] flex h-4 gap-[2px] leading-[15px]">
      <div className="w-[190px] border-t border-r border-l border-t-[#808080] border-r-white border-l-[#808080] pl-[3px] whitespace-nowrap">
        USB Осциллограф не подключен
      </div>
      <div className="flex-1 border-t border-r border-l border-t-[#808080] border-r-white border-l-[#808080]" />
      <div className="w-[49px] border-t border-l border-[#808080] pl-px">1.6.1</div>
    </footer>
  );
}

export default function App() {
  return (
    <div className="min-h-screen bg-white p-1 font-['DejaVu_Sans_Condensed','Noto_Sans',sans-serif] text-[11px] leading-[14px] text-black">
      <main className="bg-[#d4d0c8]">
        <TitleBar />
        <MenuBar />
        <TabBar />
        <div className="border border-[#808080]">
          <Toolbar />
          <Plot />
          <ScrollRow />
          <Splitter />
          <div className="flex justify-center gap-[5px] pt-2 pb-px">
            <ChannelGroup />
            <RateGroup />
            <SyncGroup />
            <ControlGroup />
          </div>
        </div>
        <StatusBar />
      </main>
    </div>
  );
}
